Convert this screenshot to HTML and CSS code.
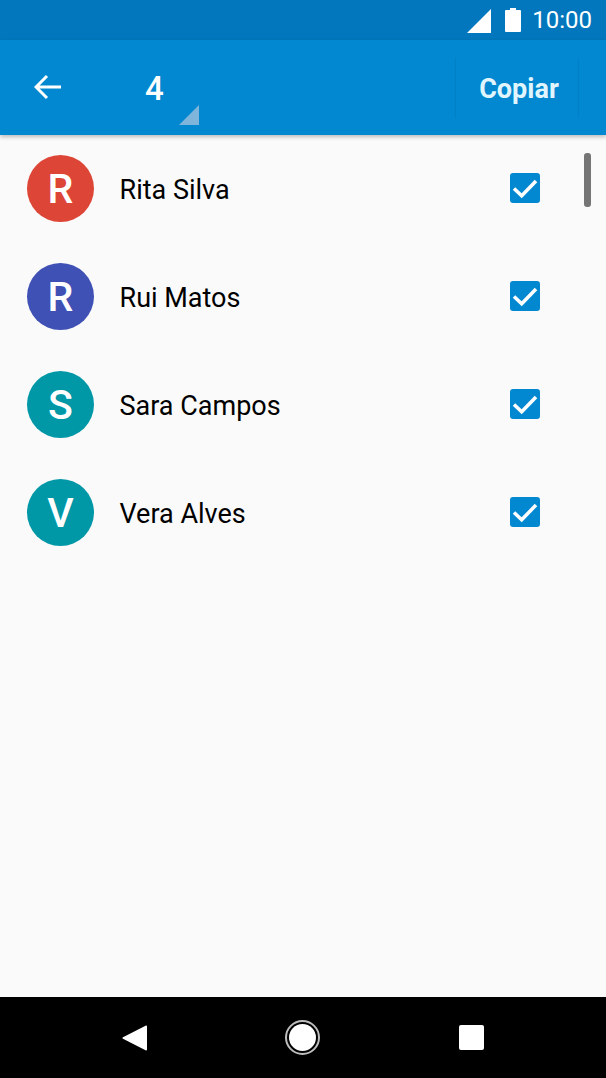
FILE: index.html
```html
<!DOCTYPE html>
<html lang="pt">
<head>
  <meta charset="UTF-8">
  <meta name="viewport" content="width=device-width, initial-scale=1.0">
  <title>Copiar contactos</title>
  <link rel="stylesheet" href="styles.css">
</head>
<body>

  <div id="screen">

    <div class="status-bar">
      <svg class="signal" width="24" height="24" viewBox="0 0 24 24"><path d="M0 24L24 0V24Z"/></svg>
      <svg class="battery" width="16" height="24" viewBox="0 0 16 24"><path d="M5 0H11V2H15A1 1 0 0 1 16 3V23A1 1 0 0 1 15 24H1A1 1 0 0 1 0 23V3A1 1 0 0 1 1 2H5Z"/></svg>
      <span class="clock">10:00</span>
    </div>

    <div class="app-bar">
      <svg class="back" width="28" height="26" viewBox="0 0 28 26"><path d="M27 13H3M13 2L2 13L13 24"/></svg>
      <div class="count">
        <span>4</span>
        <i class="count-arrow"></i>
      </div>
      <div class="action">Copiar</div>
    </div>

    <div class="list">
      <div class="row">
        <div class="avatar red">R</div>
        <div class="name">Rita Silva</div>
        <div class="check"><svg width="30" height="30" viewBox="0 0 30 30"><path d="M4 15.500L11.700 22.800L26 8"/></svg></div>
      </div>
      <div class="row">
        <div class="avatar indigo">R</div>
        <div class="name">Rui Matos</div>
        <div class="check"><svg width="30" height="30" viewBox="0 0 30 30"><path d="M4 15.500L11.700 22.800L26 8"/></svg></div>
      </div>
      <div class="row">
        <div class="avatar teal">S</div>
        <div class="name">Sara Campos</div>
        <div class="check"><svg width="30" height="30" viewBox="0 0 30 30"><path d="M4 15.500L11.700 22.800L26 8"/></svg></div>
      </div>
      <div class="row">
        <div class="avatar teal">V</div>
        <div class="name">Vera Alves</div>
        <div class="check"><svg width="30" height="30" viewBox="0 0 30 30"><path d="M4 15.500L11.700 22.800L26 8"/></svg></div>
      </div>
      <div class="scroll-thumb"></div>
    </div>

    <div class="nav-bar">
      <svg width="26" height="28" viewBox="0 0 26 28"><path d="M24 1.500A1 1 0 0 1 25 2.500V25.500A1 1 0 0 1 24 26.500L1.500 15A1 1 0 0 1 1.500 13Z"/></svg>
      <div class="home"><div class="home-dot"></div></div>
      <div class="recents"></div>
    </div>

  </div>

</body>
</html>
```

FILE: styles.css
```css
body {
  margin: 0;
  font-family: 'Roboto', 'Liberation Sans', sans-serif;
  background-color: #fafafa;
}

#screen {
  width: 606px;
  height: 1078px;
  display: flex;
  flex-direction: column;
  overflow: hidden;
}

.status-bar {
  height: 40px;
  flex: none;
  background-color: #0277bd;
  display: flex;
  align-items: center;
  justify-content: flex-end;
  padding-right: 14px;
  color: #fff;
}

.status-bar svg {
  fill: #fff;
  display: block;
}

.signal {
  margin-right: 14px;
  margin-top: 1px;
}

.battery {
  margin-right: 11px;
}

.clock {
  font-size: 24px;
  line-height: 40px;
}

.app-bar {
  height: 95px;
  flex: none;
  background-color: #0288d1;
  box-shadow: 0 2px 4px rgba(0, 0, 0, 0.25);
  display: flex;
  align-items: center;
  position: relative;
  z-index: 1;
  color: #fff;
}

.back {
  margin-left: 34px;
  margin-top: -2px;
  fill: none;
  stroke: #fff;
  stroke-width: 3px;
}

.count {
  margin-left: 83px;
  width: 54px;
  height: 95px;
  position: relative;
  font-size: 33px;
  font-weight: 500;
  line-height: 98px;
}

.count-arrow {
  position: absolute;
  left: 34px;
  top: 65px;
  width: 0;
  height: 0;
  border-left: 20px solid transparent;
  border-bottom: 20px solid #7fb5da;
}

.action {
  margin-left: auto;
  margin-right: 27px;
  height: 60px;
  width: 122px;
  border-left: 1px solid #0280c5;
  border-right: 1px solid #0280c5;
  text-align: center;
  text-indent: 4px;
  font-size: 27px;
  font-weight: 700;
  line-height: 62px;
  color: #e1f5fe;
}

.list {
  flex: 1;
  position: relative;
  background-color: #fafafa;
}

/* 2px at the bottom puts the avatars and boxes 1px above the row's middle */
.row {
  height: 106px;
  padding: 0 0 2px 27px;
  display: flex;
  align-items: center;
}

.avatar {
  width: 67px;
  height: 67px;
  border-radius: 50%;
  color: #fff;
  font-size: 41px;
  font-weight: 500;
  line-height: 68px;
  text-align: center;
}

.red {
  background-color: #dd4537;
}

.indigo {
  background-color: #3f51b5;
}

.teal {
  background-color: #0097a7;
}

.name {
  margin: 4px 0 0 25.500px;
  font-size: 27px;
  color: #000;
  flex: 1;
}

.check {
  width: 30px;
  height: 30px;
  margin-right: 66px;
  background-color: #0288d1;
  border-radius: 3px;
}

.check svg {
  display: block;
  fill: none;
  stroke: #fff;
  stroke-width: 3.500px;
}

.scroll-thumb {
  position: absolute;
  left: 584px;
  top: 18px;
  width: 7px;
  height: 54px;
  border-radius: 3px;
  background-color: #757575;
}

.nav-bar {
  height: 81px;
  flex: none;
  background-color: #000;
  display: flex;
  align-items: center;
  padding-left: 122px;
}

.nav-bar svg {
  fill: #fff;
  display: block;
}

.home {
  width: 35px;
  height: 35px;
  margin-left: 137px;
  box-sizing: border-box;
  border: 2px solid #bdbdbd;
  border-radius: 50%;
  padding: 2px;
}

.home-dot {
  width: 27px;
  height: 27px;
  background-color: #fff;
  border-radius: 50%;
}

.recents {
  width: 25px;
  height: 25px;
  margin-left: 139px;
  background-color: #fff;
  border-radius: 2px;
}
```
